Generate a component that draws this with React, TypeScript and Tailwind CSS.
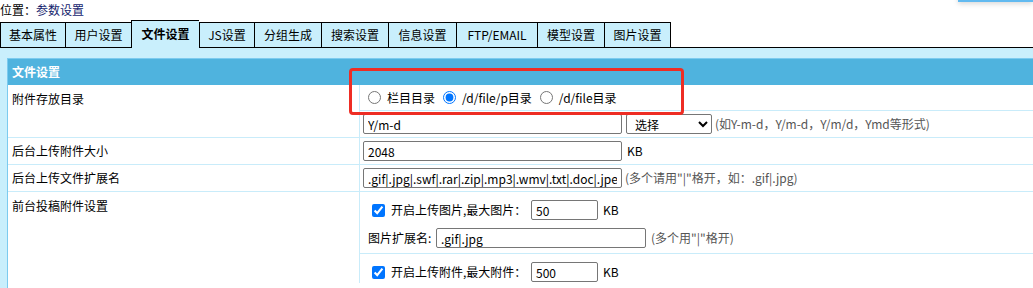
import React from 'react';

const tabs = [
  { label: '基本属性', w: 'w-[65px]' },
  { label: '用户设置', w: 'w-[66px]' },
  { label: '文件设置', w: 'w-[68px]', active: true },
  { label: 'JS设置', w: 'w-[55px]' },
  { label: '分组生成', w: 'w-[67px]' },
  { label: '搜索设置', w: 'w-[67px]' },
  { label: '信息设置', w: 'w-[68px]' },
  { label: 'FTP/EMAIL', w: 'w-[81px]' },
  { label: '模型设置', w: 'w-[67px]' },
  { label: '图片设置', w: 'w-[67px] border-r' },
];

const line = 'border-[#c9ecfa]';
const inputCls = 'h-[20px] shrink-0 border border-[#767676] rounded-[2px] px-[4px] bg-white text-[12px] text-black outline-none';

function TextInput({ value, w }: { value: string; w: string }) {
  return <input type="text" defaultValue={value} className={`${inputCls} ${w}`} />;
}

export default function App() {
  return (
    <div className="relative w-[1033px] h-[288px] overflow-hidden bg-white text-[12px] text-black [font-family:'Noto_Sans_CJK_SC','Noto_Sans',sans-serif]">
      {/* floating thing at top right */}
      <div className="absolute left-[958px] right-0 top-[-30px] h-[32px] bg-white border-b-2 border-[#62baf0] shadow-[0_2px_5px_rgba(0,0,0,0.15)]" />

      <div className="h-[20px] leading-[20px]">
        位置：<span className="text-[#14246e]">参数设置</span>
      </div>

      {/* Tabs */}
      <div className="flex items-end h-[28px] border-b border-black">
        {tabs.map((t) =>
          t.active ? (
            <div
              key={t.label}
              className={`${t.w} h-[28px] -mb-px relative z-10 border-l border-t border-black bg-[#c9effc] flex items-center justify-center font-bold pb-[2px]`}
            >
              {t.label}
            </div>
          ) : (
            <div
              key={t.label}
              className={`${t.w} h-[25px] border-l border-t border-black bg-[#c9effc] flex items-center justify-center`}
            >
              {t.label}
            </div>
          )
        )}
      </div>

      {/* Body */}
      <div className="bg-[#c9effc] pt-[10px] pl-[7px] h-[260px]">
        <div className="w-[1100px] border border-[#7ccbef] bg-white h-[300px]">
          <div className="h-[26px] bg-[#4fb3de] text-white font-bold pl-[4px] leading-[26px]">文件设置</div>

          {/* 附件存放目录 */}
          <div className={`grid grid-cols-[352px_1fr] border-b ${line}`}>
            <div className={`border-r ${line} pl-[4px] pt-[5px] leading-[18px]`}>附件存放目录</div>
            <div>
              <div className={`h-[26px] border-b ${line} flex items-center pl-[8px] whitespace-nowrap`}>
                <input type="radio" name="dir" className="w-[13px] h-[13px] m-0 shrink-0" />
                <span className="ml-[6px] mr-[8px]">栏目目录</span>
                <input type="radio" name="dir" defaultChecked className="w-[13px] h-[13px] m-0 shrink-0" />
                <span className="ml-[6px] mr-[8px]">/d/file/p目录</span>
                <input type="radio" name="dir" className="w-[13px] h-[13px] m-0 shrink-0" />
                <span className="ml-[6px]">/d/file目录</span>
              </div>
              <div className="h-[26px] flex items-center pl-[3px] whitespace-nowrap">
                <TextInput value="Y/m-d" w="w-[259px]" />
                <select className={`${inputCls} w-[86px] ml-[4px] px-[2px]`} defaultValue="">
                  <option value="">选择</option>
                  <option value="Y-m-d">Y-m-d</option>
                  <option value="Y/m-d">Y/m-d</option>
                </select>
                <span className="ml-[3px] text-[#555]">(如Y-m-d，Y/m-d，Y/m/d，Ymd等形式)</span>
              </div>
            </div>
          </div>

          {/* 后台上传附件大小 */}
          <div className={`grid grid-cols-[352px_1fr] border-b ${line}`}>
            <div className={`border-r ${line} pl-[4px] leading-[26px]`}>后台上传附件大小</div>
            <div className="h-[26px] flex items-center pl-[3px]">
              <TextInput value="2048" w="w-[259px]" />
              <span className="ml-[5px]">KB</span>
            </div>
          </div>

          {/* 后台上传文件扩展名 */}
          <div className={`grid grid-cols-[352px_1fr] border-b ${line}`}>
            <div className={`border-r ${line} pl-[4px] leading-[26px]`}>后台上传文件扩展名</div>
            <div className="h-[26px] flex items-center pl-[3px] whitespace-nowrap">
              <TextInput value=".gif|.jpg|.swf|.rar|.zip|.mp3|.wmv|.txt|.doc|.jpeg" w="w-[259px]" />
              <span className="ml-[3px] text-[#555]">(多个请用"|"格开，如：.gif|.jpg)</span>
            </div>
          </div>

          {/* 前台投稿附件设置 */}
          <div className="grid grid-cols-[352px_1fr]">
            <div className={`border-r ${line} pl-[4px] pt-[5px] leading-[18px]`}>前台投稿附件设置</div>
            <div>
              <div className={`h-[62px] border-b ${line} pt-[7px] flex flex-col gap-[6px] whitespace-nowrap`}>
                <div className="h-[22px] flex items-center pl-[12px]">
                  <input type="checkbox" defaultChecked className="w-[13px] h-[13px] m-0 shrink-0" />
                  <span className="ml-[6px] w-[140px] shrink-0">开启上传图片,最大图片：</span>
                  <TextInput value="50" w="w-[67px]" />
                  <span className="ml-[5px]">KB</span>
                </div>
                <div className="h-[22px] flex items-center pl-[8px]">
                  <span className="w-[68px] shrink-0">图片扩展名:</span>
                  <TextInput value=".gif|.jpg" w="w-[210px]" />
                  <span className="ml-[5px] text-[#555]">(多个用"|"格开)</span>
                </div>
              </div>
              <div className="pt-[7px] whitespace-nowrap">
                <div className="h-[22px] flex items-center pl-[12px]">
                  <input type="checkbox" defaultChecked className="w-[13px] h-[13px] m-0 shrink-0" />
                  <span className="ml-[6px] w-[140px] shrink-0">开启上传附件,最大附件：</span>
                  <TextInput value="500" w="w-[67px]" />
                  <span className="ml-[5px]">KB</span>
                </div>
              </div>
            </div>
          </div>
        </div>
      </div>

      {/* red annotation box */}
      <div className="absolute left-[349px] top-[68px] w-[335px] h-[47px] border-[3px] border-[#ee2d24] rounded-[4px] pointer-events-none" />
    </div>
  );
}
